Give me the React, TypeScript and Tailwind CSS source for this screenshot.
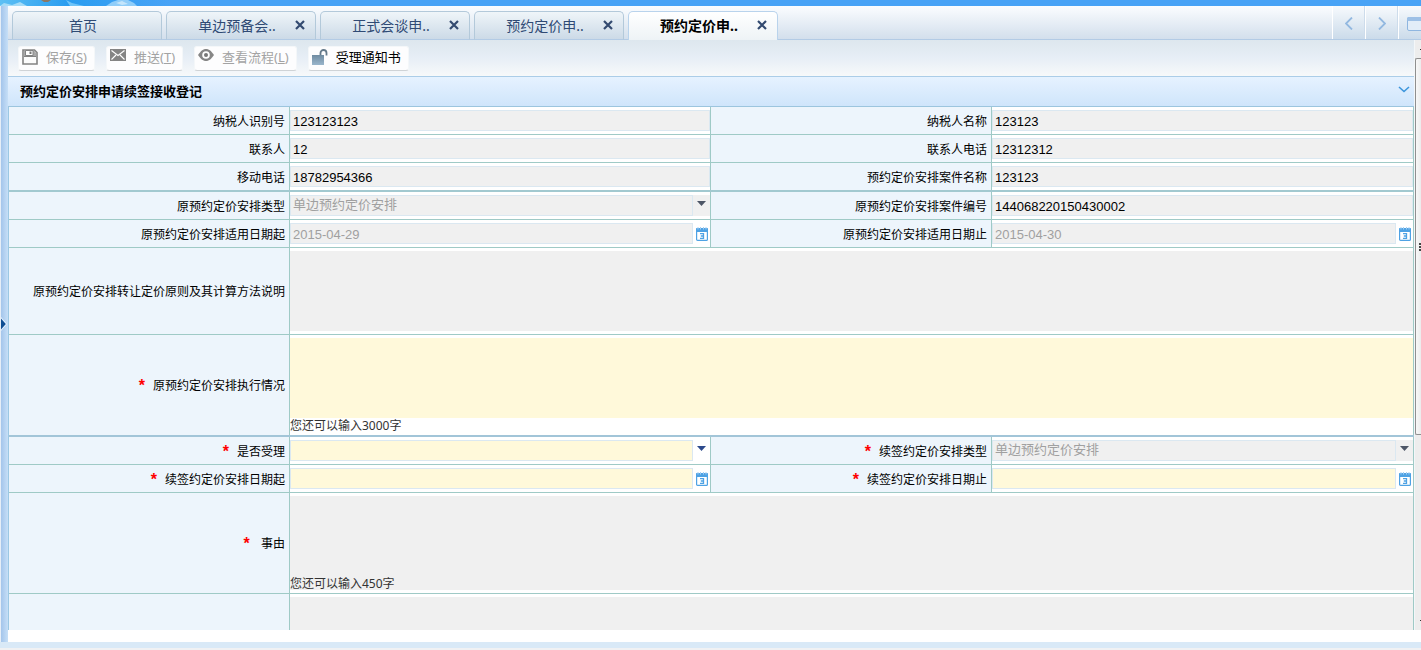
import React from 'react';

const CJK = "font-['Liberation_Sans','Noto_Sans_CJK_SC',sans-serif]";
const CJK_UI = "font-['Noto_Sans','Noto_Sans_CJK_SC',sans-serif]";

function CloseIcon() {
  return (
    <svg width="10" height="10" viewBox="0 0 10 10" aria-hidden="true">
      <path d="M1 1L9 9M9 1L1 9" stroke="#334a70" strokeWidth="2.2" fill="none" />
    </svg>
  );
}

function SaveIcon() {
  return (
    <svg width="16" height="16" viewBox="0 0 16 16" aria-hidden="true">
      <path d="M1 1h11.500L15 3.500V15H1z" fill="#fcfcfc" stroke="#838383" strokeWidth="1.600" />
      <path d="M2 2h10.500L14 3.500V7H2z" fill="#a9a9a9" />
      <path d="M3.500 1.500h7.500v5H3.500z" fill="#fff" stroke="#838383" />
      <path d="M7.500 2.500h2v2.500h-2z" fill="#777" />
      <path d="M2 7.500h12" stroke="#838383" />
    </svg>
  );
}

function MailIcon() {
  return (
    <svg className="mb-1" width="16" height="12" viewBox="0 0 16 12" aria-hidden="true">
      <rect width="16" height="12" fill="#848484" />
      <path d="M1.500 1.500L8 6.500L14.500 1.500M1.500 10.500L6 6M14.500 10.500L10 6" stroke="#fff" strokeWidth="1.100" fill="none" />
    </svg>
  );
}

function EyeIcon() {
  return (
    <svg className="mb-1" width="16" height="12" viewBox="0 0 16 12" aria-hidden="true">
      <path d="M0 6C3 1.500 5.500 0 8 0s5 1.500 8 6c-3 4.500-5.500 6-8 6S3 10.500 0 6z" fill="#868686" />
      <circle cx="8" cy="6" r="3.800" fill="#fff" />
      <circle cx="8" cy="6" r="2" fill="#777" />
    </svg>
  );
}

function UnlockIcon() {
  return (
    <svg width="16" height="16" viewBox="0 0 16 16" aria-hidden="true">
      <defs>
        <linearGradient id="lock" x1="0" y1="0" x2="0" y2="1">
          <stop offset="0" stopColor="#6f8ba1" />
          <stop offset="1" stopColor="#9ab6cc" />
        </linearGradient>
      </defs>
      <rect x="0" y="6" width="12" height="10" fill="url(#lock)" />
      <path d="M8.500 6V4a3 3 0 0 1 6 0v2.500" fill="none" stroke="#64798a" strokeWidth="1.800" />
    </svg>
  );
}

function CalendarIcon() {
  return (
    <svg width="12" height="14" viewBox="0 0 12 14" aria-hidden="true">
      <rect x="0.600" y="1.600" width="10.800" height="11.800" rx="1" fill="#fff" stroke="#4ea2e4" strokeWidth="1.200" />
      <rect x="0" y="1" width="12" height="4" rx="1" fill="#4ea2e4" />
      <path d="M2 0v2.500M4.500 0v2.500M7.500 0v2.500M10 0v2.500" stroke="#a5d0f4" strokeWidth="1" />
      <path d="M4 6.700h3.500v4.600H4M4.800 9H7.500" fill="none" stroke="#4ea2e4" strokeWidth="1.300" />
    </svg>
  );
}

function Tab({ title, active, closable = true }: { title: string; active?: boolean; closable?: boolean }) {
  return (
    <div
      className={
        active
          ? 'relative flex h-[29px] w-[150px] rounded-t-[5px] border border-b-0 border-[#b9d3ec] bg-gradient-to-b from-white to-[#eef3f6]'
          : 'relative flex h-[29px] w-[150px] rounded-t-[5px] border border-[#b3c9da] border-b-[#b3cbe5] bg-gradient-to-b from-[#eff5f9] to-[#ccdae7]'
      }
    >
      <button
        type="button"
        className={
          active
            ? 'flex-1 pr-2 text-center text-[14px] leading-[28px] font-bold text-black'
            : 'flex-1 pr-2 text-center text-[14px] leading-[28px] text-[#2f4a74]'
        }
      >
        {title}
      </button>
      {closable && (
        <button type="button" aria-label={`关闭 ${title}`} className="absolute top-2 right-2.5">
          <CloseIcon />
        </button>
      )}
    </div>
  );
}

function ToolButton({ icon, text, hotkey, enabled }: { icon: React.ReactNode; text: string; hotkey?: string; enabled?: boolean }) {
  return (
    <button
      type="button"
      disabled={!enabled}
      className={
        enabled
          ? 'flex h-[25px] items-center gap-2 rounded-[3px] border border-[#f4f7f9] border-b-[#cfd3d6] bg-[#fdfdfe] pr-[7px] pb-0.5 pl-[3px] text-[13px] text-black'
          : 'flex h-[25px] items-center gap-2 rounded-[3px] border border-[#f4f7f9] border-b-[#cfd3d6] bg-[#fdfdfe] pr-[7px] pb-0.5 pl-[3px] text-[13px] text-[#a3a3a3]'
      }
    >
      {icon}
      <span className="leading-5 whitespace-nowrap">
        {text}
        {hotkey && (
          <>
            (<u>{hotkey}</u>)
          </>
        )}
      </span>
    </button>
  );
}

function Label({ id, text, required }: { id: string; text: string; required?: boolean }) {
  return (
    <div className="flex items-center justify-end gap-2 border-r border-[#9fcac6] bg-[#edf5fc] pt-0.5 pr-1">
      {required && <span className="h-4 text-[16px] leading-4 font-bold text-[#f00]">*</span>}
      <label htmlFor={id} className="text-[12px] leading-[18px] text-black">
        {text}
      </label>
    </div>
  );
}

const boxOff = 'h-[21px] min-w-0 flex-1 border border-[#dbe8f1] bg-[#f0f0f0] px-0.5 text-[13px] leading-[17px]';
const boxOn = 'h-[21px] min-w-0 flex-1 border border-[#dbe8f1] bg-[#fff9da] px-0.5 text-[13px] leading-[17px]';

function Cell({ children }: { children: React.ReactNode }) {
  return <div className="flex min-w-0 border-r border-[#9fcac6] bg-white py-[3px]">{children}</div>;
}

function TextField({ id, value }: { id: string; value: string }) {
  return (
    <Cell>
      <input id={id} readOnly defaultValue={value} className={`${boxOff} pt-0.5 text-black`} />
    </Cell>
  );
}

function SelectField({ id, value }: { id: string; value?: string }) {
  return (
    <Cell>
      <select
        id={id}
        disabled={!!value}
        className={value ? `${boxOff} appearance-none pb-[3px] text-[#a0a0a0] opacity-100` : `${boxOn} appearance-none`}
      >
        <option>{value ?? ''}</option>
      </select>
      <span className={value ? 'flex w-[17px] justify-center bg-[#f0f0f0] pt-1.5' : 'flex w-[17px] justify-center pt-1.5'}>
        <svg width="9" height="5" viewBox="0 0 9 5" aria-hidden="true">
          <path d="M0 0h9L4.500 5z" fill={value ? '#4d5666' : '#2c4a8c'} />
        </svg>
      </span>
    </Cell>
  );
}

function DateField({ id, value }: { id: string; value?: string }) {
  return (
    <Cell>
      <input
        id={id}
        disabled={!!value}
        defaultValue={value ?? ''}
        className={value ? `${boxOff} pt-0.5 text-[#a0a0a0]` : `${boxOn} pt-0.5`}
      />
      <button type="button" aria-label="选择日期" className="flex w-[17px] items-center justify-center">
        <CalendarIcon />
      </button>
    </Cell>
  );
}

const pair = 'grid min-h-7 grid-cols-[281fr_421fr_281fr_422fr] border-b border-[#9fcac6]';
const pairThick = 'grid min-h-[29px] grid-cols-[281fr_421fr_281fr_422fr] border-b-2 border-[#a2c9d0]';
const wide = 'grid grid-cols-[281fr_1124fr] border-b border-[#9fcac6]';
const wideThick = 'grid grid-cols-[281fr_1124fr] border-b-2 border-[#a2c5d8]';

export default function App() {
  return (
    <div className={`flex h-screen flex-col overflow-hidden bg-[#f0f1f3] ${CJK}`}>
      <div className="h-1.5 shrink-0 overflow-hidden bg-[#48a3f6]">
        <svg width="170" height="6" viewBox="0 0 170 6" aria-hidden="true">
          <defs>
            <linearGradient id="sky" x1="0" x2="1">
              <stop offset="0" stopColor="#5cc0f4" />
              <stop offset="0.400" stopColor="#2a9df0" />
              <stop offset="1" stopColor="#48a3f6" />
            </linearGradient>
          </defs>
          <rect width="170" height="6" fill="url(#sky)" />
          <path d="M0 6L4 3L12 5L20 2L27 6z" fill="#a6dcf7" />
          <path d="M66 0L72 3L84 6H70z" fill="#6fc4f8" />
          <path d="M106 6L112 2L118 0H128L134 3L137 6z" fill="#8fcdf9" />
          <path d="M116 3L122 1L128 4L122 5z" fill="#c4e5fb" />
          <path d="M41 0h10l-3 2h-4z" fill="#8c7864" />
        </svg>
      </div>

      <div className="flex min-h-0 flex-1">
        <div className="flex w-2 shrink-0 items-center border-l border-[#e6eef7] bg-gradient-to-r from-[#a4c5eb] to-[#c6dff7]">
          <button type="button" aria-label="展开侧栏" className="w-1.5">
            <svg width="6" height="14" viewBox="0 0 6 14" aria-hidden="true">
              <path d="M0 0L6 7L0 14z" fill="#e8f4ff" />
              <path d="M0 1.500L4.800 7L0 12.500z" fill="#0f4f94" />
            </svg>
          </button>
        </div>

        <div className="flex min-w-0 flex-1 flex-col bg-white">
          <div className="flex h-[34px] shrink-0 items-end border-b border-[#b3cbe5] bg-gradient-to-b from-[#fbfdff] to-[#d3dfec] pl-1">
            <nav className={`-mb-px flex gap-1 ${CJK_UI}`}>
              <Tab title="首页" closable={false} />
              <Tab title="单边预备会.." />
              <Tab title="正式会谈申.." />
              <Tab title="预约定价申.." />
              <Tab title="预约定价申.." active />
            </nav>
            <div className="ml-auto flex h-[33px] bg-gradient-to-b from-[#f7fafd] to-[#cbdbea]">
              <button type="button" aria-label="向左" className="flex w-[33px] items-center justify-center border-r border-l border-r-[#cddceb] border-l-white pt-0.5">
                <svg width="8" height="13" viewBox="0 0 8 13" aria-hidden="true">
                  <path d="M7 0.500L1 6.500L7 12.500" fill="none" stroke="#92b8e0" strokeWidth="1.800" />
                </svg>
              </button>
              <button type="button" aria-label="向右" className="flex w-[33px] items-center justify-center border-r border-l border-r-[#cddceb] border-l-white pt-0.5">
                <svg width="8" height="13" viewBox="0 0 8 13" aria-hidden="true">
                  <path d="M1 0.500L7 6.500L1 12.500" fill="none" stroke="#92b8e0" strokeWidth="1.800" />
                </svg>
              </button>
              <button type="button" aria-label="窗口" className="flex w-[23px] items-center overflow-hidden border-l border-white pt-0.5 pl-2">
                <svg className="shrink-0" width="17" height="14" viewBox="0 0 17 14" aria-hidden="true">
                  <rect x="0.500" y="0.500" width="16" height="13" rx="1.500" fill="#e2edf8" stroke="#8fb6e0" />
                  <rect x="0" y="0" width="17" height="4" rx="1.500" fill="#9dc0e6" />
                </svg>
              </button>
            </div>
          </div>

          <div className="flex min-h-0 flex-1 pb-3">
            <main className="min-w-0 flex-1 overflow-hidden">
              <div className={`flex h-9 items-center gap-[11px] bg-gradient-to-b from-[#dde7ee] via-[#e7eef6] to-[#f7f9fa] pl-2.5 ${CJK_UI}`}>
                <ToolButton icon={<SaveIcon />} text="保存" hotkey="S" />
                <ToolButton icon={<MailIcon />} text="推送" hotkey="T" />
                <ToolButton icon={<EyeIcon />} text="查看流程" hotkey="L" />
                <ToolButton icon={<UnlockIcon />} text="受理通知书" enabled />
              </div>

              <div className="flex h-[31px] items-center justify-between border-t border-b border-t-[#abcde8] border-b-[#9cc5de] bg-gradient-to-b from-[#e6f2ff] to-[#cfe5fb] pr-1 pl-3">
                <h1 className="text-[13px] font-bold text-black">预约定价安排申请续签接收登记</h1>
                <button type="button" aria-label="收起" className="mb-1">
                  <svg width="12" height="7" viewBox="0 0 12 7" aria-hidden="true">
                    <path d="M1 1L6 5.500L11 1" fill="none" stroke="#3d96dc" strokeWidth="1.600" />
                  </svg>
                </button>
              </div>

              <form className="border-l border-[#9cc8e4]">
                <div className={pair}>
                  <Label id="taxId" text="纳税人识别号" />
                  <TextField id="taxId" value="123123123" />
                  <Label id="taxName" text="纳税人名称" />
                  <TextField id="taxName" value="123123" />
                </div>
                <div className={pair}>
                  <Label id="contact" text="联系人" />
                  <TextField id="contact" value="12" />
                  <Label id="phone" text="联系人电话" />
                  <TextField id="phone" value="12312312" />
                </div>
                <div className={pairThick}>
                  <Label id="mobile" text="移动电话" />
                  <TextField id="mobile" value="18782954366" />
                  <Label id="caseName" text="预约定价安排案件名称" />
                  <TextField id="caseName" value="123123" />
                </div>
                <div className={pair}>
                  <Label id="oldType" text="原预约定价安排类型" />
                  <SelectField id="oldType" value="单边预约定价安排" />
                  <Label id="oldNo" text="原预约定价安排案件编号" />
                  <TextField id="oldNo" value="144068220150430002" />
                </div>
                <div className={pair}>
                  <Label id="oldFrom" text="原预约定价安排适用日期起" />
                  <DateField id="oldFrom" value="2015-04-29" />
                  <Label id="oldTo" text="原预约定价安排适用日期止" />
                  <DateField id="oldTo" value="2015-04-30" />
                </div>
                <div className={wide}>
                  <Label id="method" text="原预约定价安排转让定价原则及其计算方法说明" />
                  <Cell>
                    <textarea id="method" readOnly className="h-20 w-full resize-none bg-[#f0f0f0]" />
                  </Cell>
                </div>
                <div className={wideThick}>
                  <Label id="progress" text="原预约定价安排执行情况" required />
                  <div className="border-r border-[#9fcac6] bg-white pt-[3px]">
                    <textarea id="progress" className="block h-20 w-full resize-none bg-[#fff9da]" />
                    <p className={`h-[17px] text-[12px] leading-[15px] text-[#333] ${CJK_UI}`}>您还可以输入3000字</p>
                  </div>
                </div>
                <div className={pair}>
                  <Label id="accept" text="是否受理" required />
                  <SelectField id="accept" />
                  <Label id="newType" text="续签约定价安排类型" required />
                  <SelectField id="newType" value="单边预约定价安排" />
                </div>
                <div className={pair}>
                  <Label id="newFrom" text="续签约定价安排日期起" required />
                  <DateField id="newFrom" />
                  <Label id="newTo" text="续签约定价安排日期止" required />
                  <DateField id="newTo" />
                </div>
                <div className={wide}>
                  <Label id="reason" text={'\u00a0事由'} required />
                  <div className="border-r border-[#9fcac6] bg-white py-[3px]">
                    <div className="bg-[#f0f0f0]">
                      <textarea id="reason" readOnly className="block h-20 w-full resize-none" />
                      <p className={`h-3.5 text-[12px] leading-[15px] text-[#333] ${CJK_UI}`}>您还可以输入450字</p>
                    </div>
                  </div>
                </div>
                <div className={wide}>
                  <Label id="remark" text="" />
                  <Cell>
                    <textarea id="remark" aria-label="备注" readOnly className="h-20 w-full resize-none bg-[#f0f0f0]" />
                  </Cell>
                </div>
              </form>
            </main>

            <div className="flex w-[7px] shrink-0 flex-col border-l border-[#f4f7f9] bg-[#ededed]">
              <div className="flex h-[18px] items-center justify-end">
                <span className="h-px w-px bg-[#333]" />
              </div>
              <div className="flex h-[377px] flex-col items-end justify-center gap-px rounded-l-[2px] border border-r-0 border-[#8f8f8f] bg-gradient-to-r from-[#f8f8f8] to-[#ececec]">
                <span className="h-0.5 w-0.5 bg-[#444]" />
                <span className="h-0.5 w-0.5 bg-[#444]" />
                <span className="h-0.5 w-0.5 bg-[#444]" />
              </div>
              <div className="mt-auto flex h-5 items-center justify-end">
                <span className="h-px w-px bg-[#333]" />
              </div>
            </div>
          </div>
        </div>
      </div>
      <div className="h-2 shrink-0 border-b-2 border-[#f0f1f3] bg-[#d9e9f7]" />
    </div>
  );
}
